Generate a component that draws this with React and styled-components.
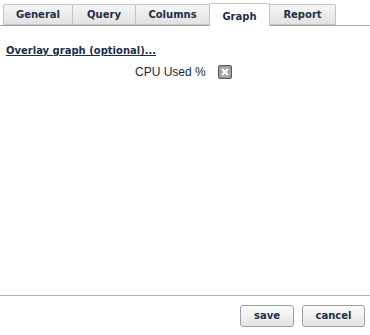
import React from 'react';
import styled, { createGlobalStyle } from 'styled-components';

const Global = createGlobalStyle`
  html, body { margin: 0; padding: 0; background: #fff; }
  body { font-family: "DejaVu Sans", Verdana, sans-serif; }
`;

const Frame = styled.div`
  width: 370px;
  height: 335px;
  display: flex;
  flex-direction: column;
  background: #fff;
`;

const TabBar = styled.div`
  display: flex;
  align-items: flex-end;
  height: 25px;
  padding-left: 3px;
  border-bottom: 1px solid #a8a8a8;
`;

const Tab = styled.div`
  box-sizing: border-box;
  width: ${p => p.w}px;
  height: ${p => (p.active ? 23 : 21)}px;
  margin-bottom: ${p => (p.active ? -1 : 0)}px;
  display: flex;
  align-items: center;
  justify-content: center;
  font-size: 10px;
  font-weight: bold;
  color: #1b2f4a;
  border: 1px solid #c4c4c4;
  border-bottom: ${p => (p.active ? 'none' : '1px solid #c4c4c4')};
  margin-right: -1px;
  background: ${p => (p.active ? '#fff' : 'linear-gradient(#f6f6f6, #e2e2e2)')};
  border-radius: 2px 2px 0 0;
  padding-top: ${p => (p.active ? 2 : 0)}px;
`;

const Body = styled.div`
  flex: 1;
  padding: 13px 6px 0;
`;

const OverlayLink = styled.a`
  font-size: 10px;
  font-weight: bold;
  color: #1b2f4a;
  text-decoration: underline;
  cursor: pointer;
`;

const Row = styled.div`
  display: flex;
  align-items: center;
  margin-top: 7px;
  padding-left: 129px;
  gap: 12px;
`;

const Label = styled.span`
  font-family: "Liberation Sans", Arial, sans-serif;
  font-size: 12px;
  color: #1e2b3c;
`;

const Remove = styled.span`
  width: 14px;
  height: 14px;
  display: inline-flex;
`;

const Footer = styled.div`
  border-top: 1px solid #b4b4b4;
  height: 39px;
  display: flex;
  justify-content: flex-end;
  align-items: center;
  gap: 8px;
  padding: 0 5px 0 0;
`;

const Button = styled.button`
  box-sizing: border-box;
  width: ${p => p.w}px;
  height: 22px;
  font-family: "DejaVu Sans", Verdana, sans-serif;
  font-size: 10px;
  font-weight: bold;
  color: #1b2f4a;
  border: 1px solid #a0a0a0;
  border-radius: 3px;
  background: linear-gradient(#fdfdfd, #e4e4e4);
  padding: 0;
`;

const RemoveIcon = () => (
  <svg width="14" height="14" viewBox="0 0 14 14">
    <rect x="0.5" y="0.5" width="13" height="13" rx="1.5" fill="#8a8a8a" stroke="#5e5e5e" />
    <rect x="1.5" y="1.5" width="11" height="11" fill="#a6a6a6" />
    <path d="M4 4 L10 10 M10 4 L4 10" stroke="#fff" strokeWidth="2.2" />
  </svg>
);

const tabs = [
  ['General', 70],
  ['Query', 64],
  ['Columns', 75],
  ['Graph', 61],
  ['Report', 67],
];

export default function App() {
  return (
    <Frame>
      <Global />
      <TabBar>
        {tabs.map(([name, w]) => (
          <Tab key={name} w={w} active={name === 'Graph'}>{name}</Tab>
        ))}
      </TabBar>
      <Body>
        <OverlayLink>Overlay graph (optional)...</OverlayLink>
        <Row>
          <Label>CPU Used %</Label>
          <Remove><RemoveIcon /></Remove>
        </Row>
      </Body>
      <Footer>
        <Button w={54}>save</Button>
        <Button w={63}>cancel</Button>
      </Footer>
    </Frame>
  );
}
